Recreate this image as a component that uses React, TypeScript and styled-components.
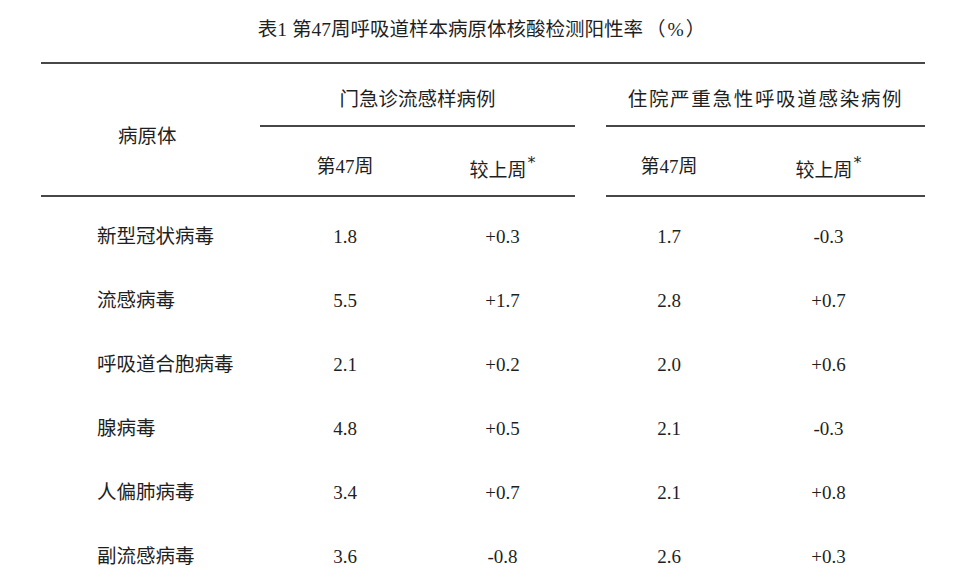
import React from "react";
import styled, { createGlobalStyle } from "styled-components";

const GlobalStyle = createGlobalStyle`
  html, body {
    margin: 0;
    padding: 0;
    background: #ffffff;
  }
  body {
    font-family: "Liberation Serif", "Noto Sans CJK SC", serif;
    color: #1f1f1f;
  }
`;

// label | 第47周 | 较上周 | gap | 第47周 | 较上周
const COLS = "219px 170px 145px 31px 126px 193px";
const RULE = "2px solid #474747";

type Row = {
  name: string;
  values: [string, string, string, string];
};

const rows: Row[] = [
  { name: "新型冠状病毒", values: ["1.8", "+0.3", "1.7", "-0.3"] },
  { name: "流感病毒", values: ["5.5", "+1.7", "2.8", "+0.7"] },
  { name: "呼吸道合胞病毒", values: ["2.1", "+0.2", "2.0", "+0.6"] },
  { name: "腺病毒", values: ["4.8", "+0.5", "2.1", "-0.3"] },
  { name: "人偏肺病毒", values: ["3.4", "+0.7", "2.1", "+0.8"] },
  { name: "副流感病毒", values: ["3.6", "-0.8", "2.6", "+0.3"] },
];

const App = () => {
  return (
    <>
      <GlobalStyle />
      <Page>
        <Title>
          表1 第47周呼吸道样本病原体核酸检测阳性率<Unit>（%）</Unit>
        </Title>
        <Head>
          <LabelHead>病原体</LabelHead>
          <GroupHead $start={2}>门急诊流感样病例</GroupHead>
          <GroupHead $start={5} $spacing={1.7}>
            住院严重急性呼吸道感染病例
          </GroupHead>
          <SubHead $col={2}>第47周</SubHead>
          <SubHead $col={3} $drop={4}>
            较上周<Star>*</Star>
          </SubHead>
          <SubHead $col={5}>第47周</SubHead>
          <SubHead $col={6} $drop={4}>
            较上周<Star>*</Star>
          </SubHead>
        </Head>
        <Body>
          {rows.map((r) => (
            <DataRow key={r.name}>
              <NameCell>{r.name}</NameCell>
              <ValueCell>{r.values[0]}</ValueCell>
              <ValueCell>{r.values[1]}</ValueCell>
              <Gap />
              <ValueCell>{r.values[2]}</ValueCell>
              <ValueCell>{r.values[3]}</ValueCell>
            </DataRow>
          ))}
        </Body>
      </Page>
    </>
  );
};

export default App;

const Page = styled.div`
  width: 960px;
  height: 588px;
  overflow: hidden;
  box-sizing: border-box;
  padding: 0 35px 0 41px;
`;

const Title = styled.h1`
  margin: 0 0 0 -1px;
  height: 62px;
  display: flex;
  align-items: center;
  justify-content: center;
  padding-bottom: 2px;
  box-sizing: border-box;
  font-size: 19.5px;
  font-weight: 400;
  line-height: 1;
`;

const Unit = styled.span`
  margin-left: 3px;
  letter-spacing: 2px;
`;

const Head = styled.div`
  display: grid;
  grid-template-columns: ${COLS};
  grid-template-rows: 63px 70px;
  border-top: ${RULE};
`;

const LabelHead = styled.div`
  grid-column: 1;
  grid-row: 1 / 3;
  border-bottom: ${RULE};
  padding: 63px 0 0 77px;
  font-size: 19.5px;
  line-height: 19px;
`;

const GroupHead = styled.div<{ $start: number; $spacing?: number }>`
  grid-column: ${(p) => p.$start} / span 2;
  grid-row: 1;
  border-bottom: ${RULE};
  text-align: center;
  padding-top: 26px;
  font-size: 19.5px;
  line-height: 19px;
  letter-spacing: ${(p) => p.$spacing ?? 0}px;
`;

const SubHead = styled.div<{ $col: number; $drop?: number }>`
  grid-column: ${(p) => p.$col};
  grid-row: 2;
  border-bottom: ${RULE};
  text-align: center;
  padding-top: ${(p) => 30 + (p.$drop ?? 0)}px;
  font-size: 19px;
  line-height: 19px;
`;

const Star = styled.sup`
  font-family: "DejaVu Sans", sans-serif;
  font-size: 16px;
  line-height: 0;
  vertical-align: 9px;
  margin-left: 1px;
`;

const Body = styled.div`
  padding-top: 7px;
`;

const DataRow = styled.div`
  display: grid;
  grid-template-columns: ${COLS};
  height: 64px;
  align-items: center;
  font-size: 19px;
`;

const NameCell = styled.div`
  padding-left: 56px;
  font-size: 19.5px;
  line-height: 19px;
`;

const ValueCell = styled.div`
  text-align: center;
  line-height: 19px;
`;

const Gap = styled.div``;
